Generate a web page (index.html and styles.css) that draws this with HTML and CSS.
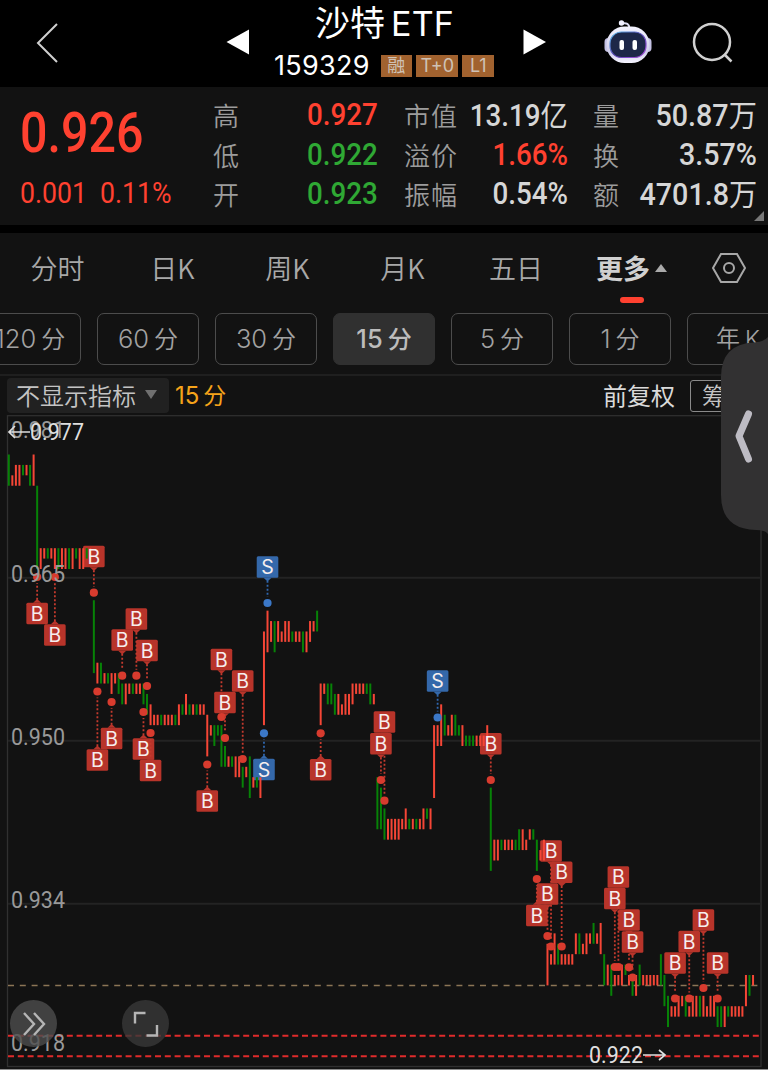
FILE: index.html
```html
<!DOCTYPE html>
<html lang="zh-CN">
<head>
    <meta charset="UTF-8">
    <meta name="viewport" content="width=device-width, initial-scale=1.0">
    <title>沙特ETF 159329</title>
    <link rel="stylesheet" href="styles.css">
</head>
<body>

    <header class="header">
        <svg class="back" width="24" height="42" viewBox="0 0 24 42"><path d="M22 2 3 21 22 40"/></svg>
        <svg class="prev" width="24" height="26" viewBox="0 0 24 26"><path d="M23 0.500V25.500L0.500 13z"/></svg>
        <div class="title">
            <h1>沙特<span>ETF</span></h1>
            <div class="code">
                <span class="code-num">159329</span>
                <span class="tag tag-cn">融</span>
                <span class="tag tag-t">T+0</span>
                <span class="tag tag-l">L1</span>
            </div>
        </div>
        <svg class="next" width="24" height="26" viewBox="0 0 24 26"><path d="M0.500 0.500V25.500L23 13z"/></svg>
        <svg class="robot" width="50" height="46" viewBox="0 0 50 46">
            <defs>
                <linearGradient id="shell" x1="0" y1="0" x2="0" y2="1">
                    <stop offset="0" stop-color="#f4f4ff"/>
                    <stop offset="0.7" stop-color="#cfcdea"/>
                    <stop offset="1" stop-color="#f5f4ff"/>
                </linearGradient>
                <linearGradient id="rim" x1="0" y1="0" x2="1" y2="1">
                    <stop offset="0" stop-color="#5cc3ec"/>
                    <stop offset="0.5" stop-color="#5a48b8"/>
                    <stop offset="1" stop-color="#b04fe0"/>
                </linearGradient>
            </defs>
            <path d="M19 4.500q7-1.500 7.500 4.500" fill="none" stroke="#dcdcf2" stroke-width="2"/>
            <circle cx="18.500" cy="4" r="2.700" fill="#f0f0ff"/>
            <rect x="1.500" y="19" width="8" height="14" rx="4" fill="#c4c1e4"/>
            <rect x="40.500" y="19" width="8" height="14" rx="4" fill="#c4c1e4"/>
            <rect x="3.500" y="7.500" width="43" height="36.500" rx="18" fill="url(#shell)"/>
            <rect x="7" y="13" width="36" height="25.500" rx="11.500" fill="#1d2748" stroke="url(#rim)" stroke-width="1.200"/>
            <rect x="16.500" y="21" width="4.500" height="10" rx="2" fill="#fff"/>
            <rect x="29.500" y="21" width="4.500" height="10" rx="2" fill="#fff"/>
        </svg>
        <svg class="search" width="42" height="42" viewBox="0 0 42 42"><circle cx="20" cy="20" r="18"/><path d="M33 33l6.500 6.500"/></svg>
    </header>

    <section class="quote">
        <div class="price">
            <div class="price-now"><span class="num">0.926</span></div>
            <div class="price-diff"><span class="num">0.001</span><span class="num">0.11%</span></div>
        </div>
        <dl class="stats stats-a">
            <dt>高</dt><dd class="up"><span class="num">0.927</span></dd>
            <dt>低</dt><dd class="down"><span class="num">0.922</span></dd>
            <dt>开</dt><dd class="down"><span class="num">0.923</span></dd>
        </dl>
        <dl class="stats stats-b">
            <dt>市值</dt><dd><span class="num">13.19<i>亿</i></span></dd>
            <dt>溢价</dt><dd class="up"><span class="num">1.66%</span></dd>
            <dt>振幅</dt><dd><span class="num">0.54%</span></dd>
        </dl>
        <dl class="stats stats-c">
            <dt>量</dt><dd><span class="num">50.87<i>万</i></span></dd>
            <dt>换</dt><dd><span class="num">3.57%</span></dd>
            <dt>额</dt><dd><span class="num">4701.8<i>万</i></span></dd>
        </dl>
        <span class="corner"></span>
    </section>

    <nav class="tabs">
        <span>分时</span>
        <span>日K</span>
        <span>周K</span>
        <span>月K</span>
        <span>五日</span>
        <span class="active">更多<b class="tri-up"></b></span>
        <svg width="36" height="32" viewBox="0 0 36 32"><path d="M10 2H26L34 16 26 30H10L2 16z"/><circle cx="18" cy="16" r="5"/></svg>
    </nav>

    <div class="periods">
        <span>120<em>分</em></span>
        <span>60<em>分</em></span>
        <span>30<em>分</em></span>
        <span class="active">15<em>分</em></span>
        <span>5<em>分</em></span>
        <span>1<em>分</em></span>
        <span class="year">年<em>K</em></span>
    </div>

    <div class="toolbar">
        <div class="indicator">不显示指标<b class="tri-down"></b></div>
        <span class="current">15<em>分</em></span>
        <span class="adjust">前复权</span>
        <span class="chips">筹码</span>
    </div>

    <main class="chart">
        <svg id="kline" width="768" height="655" viewBox="0 415 768 655"></svg>
        <div class="round expand">
            <svg width="24" height="26" viewBox="0 0 24 26"><path d="M2 2 12 13 2 24M12 2 22 13 12 24"/></svg>
        </div>
        <div class="round full">
            <svg width="26" height="26" viewBox="0 0 26 26"><path d="M2 12.500V2H12.500M24 14V24.500H13.500"/></svg>
        </div>
    </main>

    <!-- боковая ручка -->
    <svg class="drawer" width="48" height="198" viewBox="0 0 48 198">
        <path class="drawer-bg" d="M48 0Q44 5 34 5.500Q1 7 1 40V158Q1 192 36 193Q45 193 48 197z"/>
        <path class="drawer-arrow" d="M28.500 77 19 99 28.500 122"/>
    </svg>

    <script src="script.js"></script>
</body>
</html>
```
FILE: styles.css
```css
* {
    box-sizing: border-box;
}
body {
    margin: 0;
    position: relative;
    width: 768px;
    height: 1070px;
    overflow: hidden;
    background-color: #121212;
    color: #d6d6d6;
    font-family: Roboto, "Noto Sans CJK SC", sans-serif;
}
i, em {
    font-style: normal;
}
svg {
    display: block;
    flex: none;
}

/* header */
.header {
    display: flex;
    height: 87px;
    background-color: #000;
}
.header svg {
    fill: none;
    stroke: #d0d0d0;
    stroke-width: 2;
}
.header .back {
    margin: 22px 0 0 35px;
}
.header .prev {
    margin: 29px 0 0 167px;
    fill: #fff;
    stroke: none;
}
.header .next {
    margin: 29px 0 0 25px;
    fill: #fff;
    stroke: none;
}
.header .robot {
    margin: 19px 0 0 56px;
    stroke: none;
}
.header .search {
    margin: 22px 0 0 39px;
    stroke-width: 2.5;
}
.title {
    width: 224px;
    margin-left: 24px;
}
h1 {
    margin: 0 0 0 41px;
    height: 49px;
    font: 400 35px/42px "Noto Sans CJK SC", sans-serif;
    color: #fff;
    white-space: nowrap;
}
h1 span {
    margin-left: 6px;
    font: 34px/40px Inter, sans-serif;
    letter-spacing: 0.2px;
}
.code {
    display: flex;
    align-items: center;
    height: 34px;
}
.code-num {
    width: 108px;
    font: 27px/34px Inter, sans-serif;
    letter-spacing: 0.3px;
    color: #fff;
}
.tag {
    height: 22px;
    margin-right: 4px;
    background-color: #a1622f;
    color: #cfc2b6;
    font: 18px/22px Inter, "Noto Sans CJK SC", sans-serif;
    text-align: center;
}
.tag-cn { width: 32px; }
.tag-t { width: 43px; }
.tag-l { width: 32px; }

/* quote */
.quote {
    position: relative;
    display: flex;
    height: 146px;
    padding-top: 8px;
    border-bottom: 8px solid #000;
}
.num {
    display: inline-block;
    transform-origin: left;
    white-space: nowrap;
}
.price {
    width: 213px;
    padding-left: 20px;
    color: #ff4130;
}
.price-now {
    height: 76px;
    font: 500 55px/76px Roboto, sans-serif;
}
.price-now .num {
    transform: scaleX(0.88);
}
.price-diff {
    display: flex;
    height: 44px;
    font: 400 29px/44px Roboto, sans-serif;
}
.price-diff .num {
    width: 80px;
    transform: scaleX(0.92);
}
.stats {
    display: grid;
    grid-template-rows: repeat(3, 39.6px);
    align-items: center;
    margin: 0;
    height: 120px;
    font-size: 26px;
    line-height: 39px;
}
.stats dt {
    font-family: "Noto Sans CJK SC", sans-serif;
    font-weight: 350;
    color: #9c9c9c;
    letter-spacing: 1px;
    white-space: nowrap;
}
.stats dd {
    margin: 0;
    font-size: 30.5px;
    font-weight: 500;
    text-align: right;
}
.stats .num {
    transform: scaleX(0.91);
    transform-origin: right;
}
.stats i {
    font: 400 30px/38px "Noto Sans CJK SC", sans-serif;
}
.stats-a {
    grid-template-columns: 60px 105px;
    width: 191px;
}
.stats-b {
    grid-template-columns: 60px 104px;
    width: 189px;
}
.stats-c {
    grid-template-columns: 40px 124px;
}
.stats-b dd, .stats-c dd {
    display: flex;
    justify-content: flex-end;
}
.stats-c .num {
    transform: scaleX(0.94);
}
.up { color: #ff4130; }
.down { color: #2fa834; }
.corner {
    position: absolute;
    right: 4px;
    bottom: 4px;
    border-left: 10px solid transparent;
    border-bottom: 10px solid #777;
}

/* tabs */
.tabs {
    position: relative;
    display: grid;
    grid-template-columns: 115px 115px 115px 115px 112px 119px 1fr;
    height: 80px;
    align-items: start;
    font: 350 27px/70px "Noto Sans CJK SC", sans-serif;
    color: #a8a8a8;
    text-align: center;
}
.tabs .active {
    position: relative;
    display: flex;
    align-items: center;
    padding-left: 24px;
    font-weight: 700;
    color: #d0d0d0;
}
.tabs .active::after {
    content: "";
    position: absolute;
    left: 48px;
    top: 64px;
    width: 24px;
    height: 6px;
    border-radius: 3px;
    background-color: #ff4130;
}
.tri-up {
    margin-left: 5px;
    border: 6px solid transparent;
    border-top: 0;
    border-bottom: 8px solid #aaa;
}
.tabs svg {
    margin: 19px 0 0 20px;
    fill: none;
    stroke: #a8a8a8;
    stroke-width: 2;
}

/* periods */
.periods {
    display: flex;
    gap: 16px;
    height: 63px;
    margin-left: -21px;
    border-bottom: 2px solid #1f1f1f;
}
.periods span {
    flex: none;
    width: 102px;
    height: 52px;
    border: 1.5px solid #4c4c4c;
    border-radius: 7px;
    font: 350 25.5px/49px Inter, "Noto Sans CJK SC", sans-serif;
    color: #a2a2a2;
    text-align: center;
}
.periods em {
    margin-left: 5px;
    font-size: 24px;
}
.periods .active {
    background-color: #303030;
    border-color: #303030;
    color: #bcbcbc;
    font-weight: 450;
}
.periods .year {
    font-size: 24px;
}
.periods .year em {
    font-size: 23px;
}

/* toolbar */
.toolbar {
    display: flex;
    align-items: center;
    height: 39px;
    padding-left: 7px;
    font: 400 24px/32px "Noto Sans CJK SC", sans-serif;
}
.indicator {
    display: flex;
    align-items: center;
    width: 162px;
    height: 35px;
    padding: 0 0 2px 9px;
    border-radius: 4px;
    background-color: #212121;
    color: #c4c4c4;
    font-weight: 350;
}
.tri-down {
    margin-left: 9px;
    border: 6px solid transparent;
    border-bottom: 0;
    border-top: 9px solid #707070;
}
.current {
    width: 428px;
    padding-left: 6px;
    color: #f5a31a;
    font-family: Inter, "Noto Sans CJK SC", sans-serif;
}
.current em {
    margin-left: 4px;
    font-size: 23px;
}
.adjust {
    width: 93px;
    padding: 0 0 2px 6px;
    color: #dadada;
    white-space: nowrap;
}
.chips {
    width: 72px;
    height: 32px;
    padding-left: 11px;
    border: 1px solid #8a8a8a;
    border-radius: 3px;
    line-height: 27px;
    color: #c4c4c4;
    font-weight: 350;
}

/* chart */
.chart {
    position: relative;
    height: 655px;
}
.frame { fill: none; stroke: #303030; stroke-width: 1.3; }
.grid { stroke: #232323; stroke-width: 2; }
.bottom-edge { stroke: #8c8c8c; }
.last-price { stroke: #8b7556; stroke-width: 1.5; stroke-dasharray: 6 5.8; }
.stop { stroke: #e02b2b; stroke-width: 2; stroke-dasharray: 6 3.8; }
.bar { stroke-width: 2; }
.bar-r { stroke: #f54636; }
.bar-g { stroke: #078207; }
.lead { stroke-width: 1.8; stroke-dasharray: 2 2; }
.mark-B .lead { stroke: #c43a2e; }
.mark-S .lead { stroke: #2f66ad; }
.mark-B circle { fill: #d83b2e; }
.mark-S circle { fill: #3b78c8; }
.mark-B .flag { fill: #b8342a; }
.mark-S .flag { fill: #3468aa; }
.mark text {
    fill: #f6eeee;
    font: 400 19.5px Inter, sans-serif;
    text-anchor: middle;
}
.axis {
    fill: #999;
    font: 400 23px Roboto, sans-serif;
}
.extreme {
    fill: #dedede;
    font: 400 23px Roboto, sans-serif;
}
.arrow {
    fill: none;
    stroke: #dedede;
    stroke-width: 1.7;
}
.round {
    position: absolute;
    top: 585px;
    display: flex;
    align-items: center;
    justify-content: center;
    width: 47px;
    height: 47px;
    border-radius: 50%;
}
.round svg {
    fill: none;
    stroke: #b5b5b5;
    stroke-width: 2.4;
}
.expand {
    left: 10px;
    background-color: rgba(78, 78, 78, 0.8);
}
.full {
    left: 122px;
    background-color: rgba(56, 56, 56, 0.8);
}

.drawer {
    position: absolute;
    right: 0;
    top: 337px;
}
.drawer-bg {
    fill: #323132;
}
.drawer-arrow {
    fill: none;
    stroke: #bdbbc3;
    stroke-width: 7;
    stroke-linecap: round;
    stroke-linejoin: round;
}
```
FILE: script.js
```js
// свечи: цвет, максимум и минимум в тиках 0.001 от 0.977
const bars = `
g0-3 r2-3 r1-3 r1-3 g1-2 r1-2 g1-3 r0-3 g3-11 r9-11 r9-10 g9-10 r9-10 r9-11 g9-11 r9-11
r9-11 g9-11 r9-11 g9-10 r9-11 r9-11 g9-10 r9-10 g14-21 r20-22 g20-22 r21-22 g21-22 r21-23
r21-22 g21-23 g22-24 r22-24 r22-23 g22-23 r22-23 r22-23 g22-24 g23-25 r24-26 r25-26 r25-26
g25-26 r25-26 r25-26 r25-26 g25-26 r24-26 g24-25 r23-25 g24-25 r24-25 g24-25 r24-25 r24-25
r25-29 r26-27 g26-28 g26-27 g26-30 g28-30 r29-30 g29-30 r29-31 r29-31 g30-32 r30-31 g29-33
r31-32 g31-32 r31-33 r17-26 r15-19 r16-18 g16-19 r16-18 r17-18 r16-18 r16-18 g17-18 r17-18
r17-18 g17-19 r17-19 r16-18 r16-17 g15-17 r22-26 r22-23 g22-24 g22-24 g23-25 r23-25 r24-25
r23-25 r23-25 r22-24 r22-23 r22-23 r22-23 g22-23 g22-24 r23-24 g31-36 g32-36 g34-37 r35-37
r35-37 r35-37 r35-37 r35-36 r34-36 g35-36 r35-36 g35-36 r35-36 r34-36 g34-35 r34-36 r26-33
r26-28 r24-28 g25-27 r26-27 r25-27 g25-27 g26-27 r26-28 g27-28 g27-28 g27-28 r27-28 r27-28
r27-28 r26-28 g32-40 r37-39 r37-39 g37-38 r37-38 r37-38 r37-38 g37-38 g36-38 r36-38 r37-38
r36-37 g36-37 g37-40 r38-39 r37-39 r47-51 r48-49 r46-49 g47-49 r48-49 r48-49 r48-49 r48-49
r46-48 g46-48 r47-48 r46-48 r46-47 g45-47 r46-47 r45-48 g48-51 r49-51 g49-52 r50-51 r50-51
r49-51 g49-50 r50-51 g50-52 r50-52 g49-51 r50-51 r50-51 r50-51 r50-51 r50-51 g48-51 g50-53
g52-55 r53-54 r53-54 r52-54 r52-53 g52-54 r53-54 r52-54 r52-54 g52-54 r52-54 r53-54 r52-54
r52-54 g53-55 g53-55 r53-55 g53-54 r53-54 r53-54 r53-54 r53-54 r50-53 g50-52 r50-51
`.trim().split(/\s+/);

// сделки: [тип, номер свечи, y точки, y метки]
const marks = [
    ['B', 8, 577, 613.5], ['B', 13, 577, 635], ['B', 24, 592.7, 556.5],
    ['B', 25, 691.5, 760], ['B', 29, 702, 738.5], ['B', 32, 675.7, 640],
    ['B', 36, 675.7, 619], ['B', 39, 686, 650.5], ['B', 38, 712, 749],
    ['B', 40, 733, 770.5], ['B', 56, 764.5, 801], ['B', 60, 717, 659.5],
    ['B', 61, 738, 702.5], ['B', 66, 759, 681], ['S', 73, 603, 567],
    ['S', 72, 733.3, 769.5], ['B', 88, 733.3, 769.7], ['B', 106, 800.7, 722],
    ['B', 105, 780, 743.7], ['S', 121, 717.5, 681], ['B', 136, 780, 743.7],
    ['B', 149, 879, 915.5], ['B', 153, 946.5, 851], ['B', 152, 936, 894],
    ['B', 156, 946.5, 872.3], ['B', 172, 967, 877], ['B', 171, 967, 898.5],
    ['B', 175, 967.3, 920], ['B', 176, 977.5, 942], ['B', 188, 998.5, 963],
    ['B', 192, 998.5, 941.5], ['B', 196, 988, 920], ['B', 200, 998.5, 963]
];

const axis = [['0.981', 438], ['0.965', 582], ['0.950', 745], ['0.934', 908], ['0.918', 1051]];

const xAt = i => 8.8 + i * 3.544;
const yAt = tick => 454.5 + tick * 10.41;
const hline = (cls, y, x1 = 8, x2 = 761) => `<line class="${cls}" x1="${x1}" x2="${x2}" y1="${y}" y2="${y}"/>`;

let out = '<rect class="frame" x="7.5" y="415.7" width="753.5" height="650.8"/>';
out += [577.7, 740.7, 903.7].map(y => hline('grid', y)).join('');
out += hline('bottom-edge', 1069.5, 0, 768);
out += hline('last-price', 985.6);
out += hline('stop', 1035.7) + hline('stop', 1056.3);

// плашки под свечами, линии и буквы поверх
let flags = '', leads = '', letters = '';
marks.forEach(([type, i, dot, y]) => {
    const x = xAt(i);
    const d = dot > y ? 1 : -1;
    const edge = y + d * 10.7;
    flags += `<g class="mark-${type}"><g class="flag">
        <rect x="${x - 10.8}" y="${y - 10.8}" width="21.6" height="21.6" rx="1.5"/>
        <path d="M${x - 4} ${edge}h8l-4 ${d * 3.8}z"/>
    </g></g>`;
    leads += `<g class="mark-${type}">
        <line class="lead" x1="${x}" x2="${x}" y1="${edge + d * 3}" y2="${dot - d * 6}"/>
        <circle cx="${x}" cy="${dot}" r="4.1"/>
    </g>`;
    letters += `<g class="mark"><text x="${x}" y="${y + 7}">${type}</text></g>`;
});

out += flags;
bars.forEach((b, i) => {
    const [top, low] = b.slice(1).split('-').map(Number);
    out += `<line class="bar bar-${b[0]}" x1="${xAt(i)}" x2="${xAt(i)}" y1="${yAt(top)}" y2="${yAt(low)}"/>`;
});
out += leads + letters;

axis.forEach(([t, y]) => {
    out += `<text class="axis" x="11" y="${y}" textLength="54" lengthAdjust="spacingAndGlyphs">${t}</text>`;
});

out += '<path class="arrow" d="M15 426 9 432 15 438M9 432H30"/>';
out += '<text class="extreme" x="30" y="440" textLength="54" lengthAdjust="spacingAndGlyphs">0.977</text>';
out += '<text class="extreme" x="589" y="1063" textLength="54" lengthAdjust="spacingAndGlyphs">0.922</text>';
out += '<path class="arrow" d="M643 1055H665M659 1050l6 5-6 5"/>';

document.getElementById('kline').innerHTML = out;
```
